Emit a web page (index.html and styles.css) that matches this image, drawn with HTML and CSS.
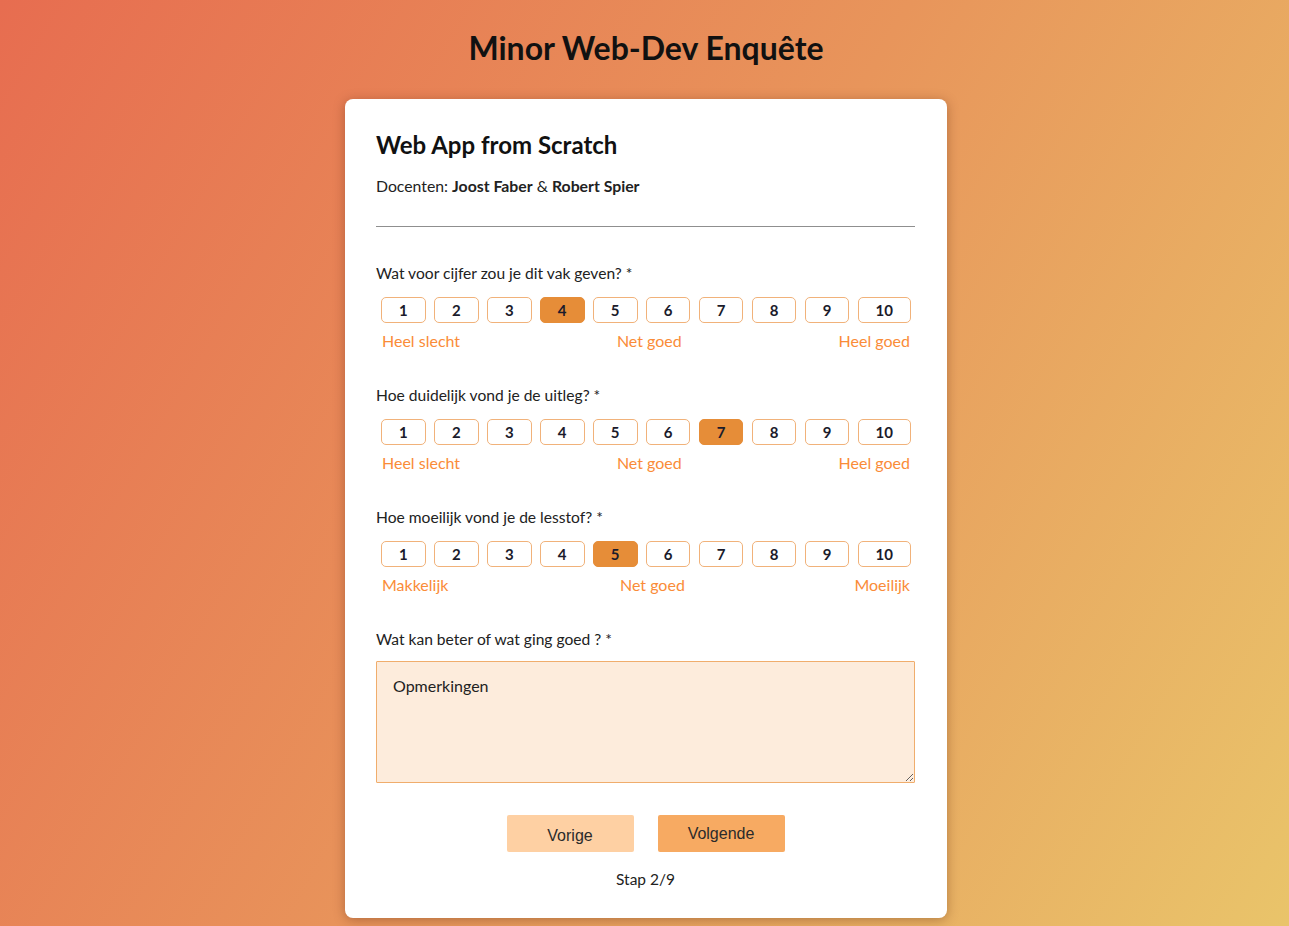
FILE: index.html
```html
<!DOCTYPE html>
<html lang="nl">
<head>
<meta charset="utf-8">
<title>Minor Web-Dev Enquête</title>
<link rel="stylesheet" href="styles.css">
</head>
<body>
<h1 class="page-title">Minor Web-Dev Enquête</h1>
<main class="card">
  <h2 class="course">Web App from Scratch</h2>
  <p class="teachers">Docenten: <strong>Joost Faber</strong> &amp; <strong>Robert Spier</strong></p>
  <hr class="divider">

  <section class="question">
    <p class="q-label">Wat voor cijfer zou je dit vak geven? *</p>
    <div class="scale">
      <span class="opt">1</span><span class="opt">2</span><span class="opt">3</span><span class="opt selected">4</span><span class="opt">5</span><span class="opt">6</span><span class="opt">7</span><span class="opt">8</span><span class="opt">9</span><span class="opt">10</span>
    </div>
    <div class="scale-labels"><span>Heel slecht</span><span>Net goed</span><span>Heel goed</span></div>
  </section>

  <section class="question">
    <p class="q-label">Hoe duidelijk vond je de uitleg? *</p>
    <div class="scale">
      <span class="opt">1</span><span class="opt">2</span><span class="opt">3</span><span class="opt">4</span><span class="opt">5</span><span class="opt">6</span><span class="opt selected">7</span><span class="opt">8</span><span class="opt">9</span><span class="opt">10</span>
    </div>
    <div class="scale-labels"><span>Heel slecht</span><span>Net goed</span><span>Heel goed</span></div>
  </section>

  <section class="question">
    <p class="q-label">Hoe moeilijk vond je de lesstof? *</p>
    <div class="scale">
      <span class="opt">1</span><span class="opt">2</span><span class="opt">3</span><span class="opt">4</span><span class="opt selected">5</span><span class="opt">6</span><span class="opt">7</span><span class="opt">8</span><span class="opt">9</span><span class="opt">10</span>
    </div>
    <div class="scale-labels"><span>Makkelijk</span><span class="mid2">Net goed</span><span>Moeilijk</span></div>
  </section>

  <section class="question last">
    <p class="q-label">Wat kan beter of wat ging goed ? *</p>
    <textarea class="remarks" placeholder="Opmerkingen"></textarea>
  </section>

  <div class="nav">
    <button class="btn prev">Vorige</button>
    <button class="btn next">Volgende</button>
  </div>
  <p class="step">Stap 2/9</p>
</main>
</body>
</html>
```
FILE: styles.css
```css
html, body { height: 100%; }
body {
  margin: 0;
  font-family: Lato, "Open Sans", sans-serif;
  color: #1b1b1b;
  background: linear-gradient(120deg, #e76d50 0%, #e8955b 50%, #e9c46a 100%);
  display: flex;
  flex-direction: column;
  align-items: center;
  padding-left: 3px;
  box-sizing: border-box;
}
.page-title {
  font-size: 32px;
  font-weight: 700;
  margin: 29px 0 0;
  line-height: 38px;
  color: #111;
}
.card {
  margin-top: 32px;
  width: 602px;
  box-sizing: border-box;
  background: #fff;
  border-radius: 8px;
  box-shadow: 0 2px 12px rgba(80, 30, 10, 0.35);
  padding: 31px 32px 30px 31px;
}
.course {
  margin: 0;
  font-size: 24px;
  line-height: 30px;
  font-weight: 700;
  color: #111;
}
.teachers {
  margin: 17px 0 0;
  font-size: 15.8px;
  line-height: 18px;
  color: #222;
}
.teachers strong { font-weight: 700; }
.divider {
  margin: 31px 0 0;
  border: 0;
  border-top: 1px solid #8f8f8f;
  height: 0;
}
.question { margin-top: 36px; }
.question + .question { margin-top: 34px; }
.q-label {
  margin: 0;
  font-size: 15.6px;
  line-height: 20px;
  color: #222;
}
.scale {
  display: flex;
  justify-content: space-between;
  padding: 0 4px 0 5px;
  margin-top: 14px;
}
.opt {
  box-sizing: border-box;
  min-width: 43px;
  height: 26px;
  padding: 0 17px;
  border: 1px solid #f1b27a;
  border-radius: 5px;
  display: flex;
  align-items: center;
  justify-content: center;
  font-size: 15px;
  font-weight: 700;
  color: #1b1b2b;
  background: #fff;
}
.opt.selected {
  background: #e68d38;
  border-color: #e68d38;
}
.scale-labels {
  display: flex;
  justify-content: space-between;
  padding: 0 5px 0 6px;
  margin-top: 8px;
  font-size: 16px;
  line-height: 20px;
  color: #fa8c38;
}
.scale-labels .mid2 { margin-left: 2px; }
.remarks {
  display: block;
  box-sizing: border-box;
  width: 100%;
  height: 122px;
  margin-top: 12px;
  padding: 14px 16px;
  background: #fdecdc;
  border: 1px solid #f0ad6c;
  border-radius: 1px;
  font-family: Lato, sans-serif;
  font-size: 16px;
  color: #222;
  resize: vertical;
}
.remarks::placeholder { color: #222; opacity: 1; }
.nav {
  display: flex;
  justify-content: center;
  gap: 24px;
  margin-top: 32px;
}
.btn {
  width: 127px;
  height: 37px;
  border: 0;
  border-radius: 2px;
  font-family: "Liberation Sans", Arial, sans-serif;
  font-size: 16px;
  color: #2b2b2b;
}
.prev { background: #fed0a3; padding-top: 6px; }
.next { background: #f7aa62; }
.step {
  margin: 18px 0 0;
  text-align: center;
  font-size: 15.5px;
  line-height: 18px;
  color: #222;
}
```
